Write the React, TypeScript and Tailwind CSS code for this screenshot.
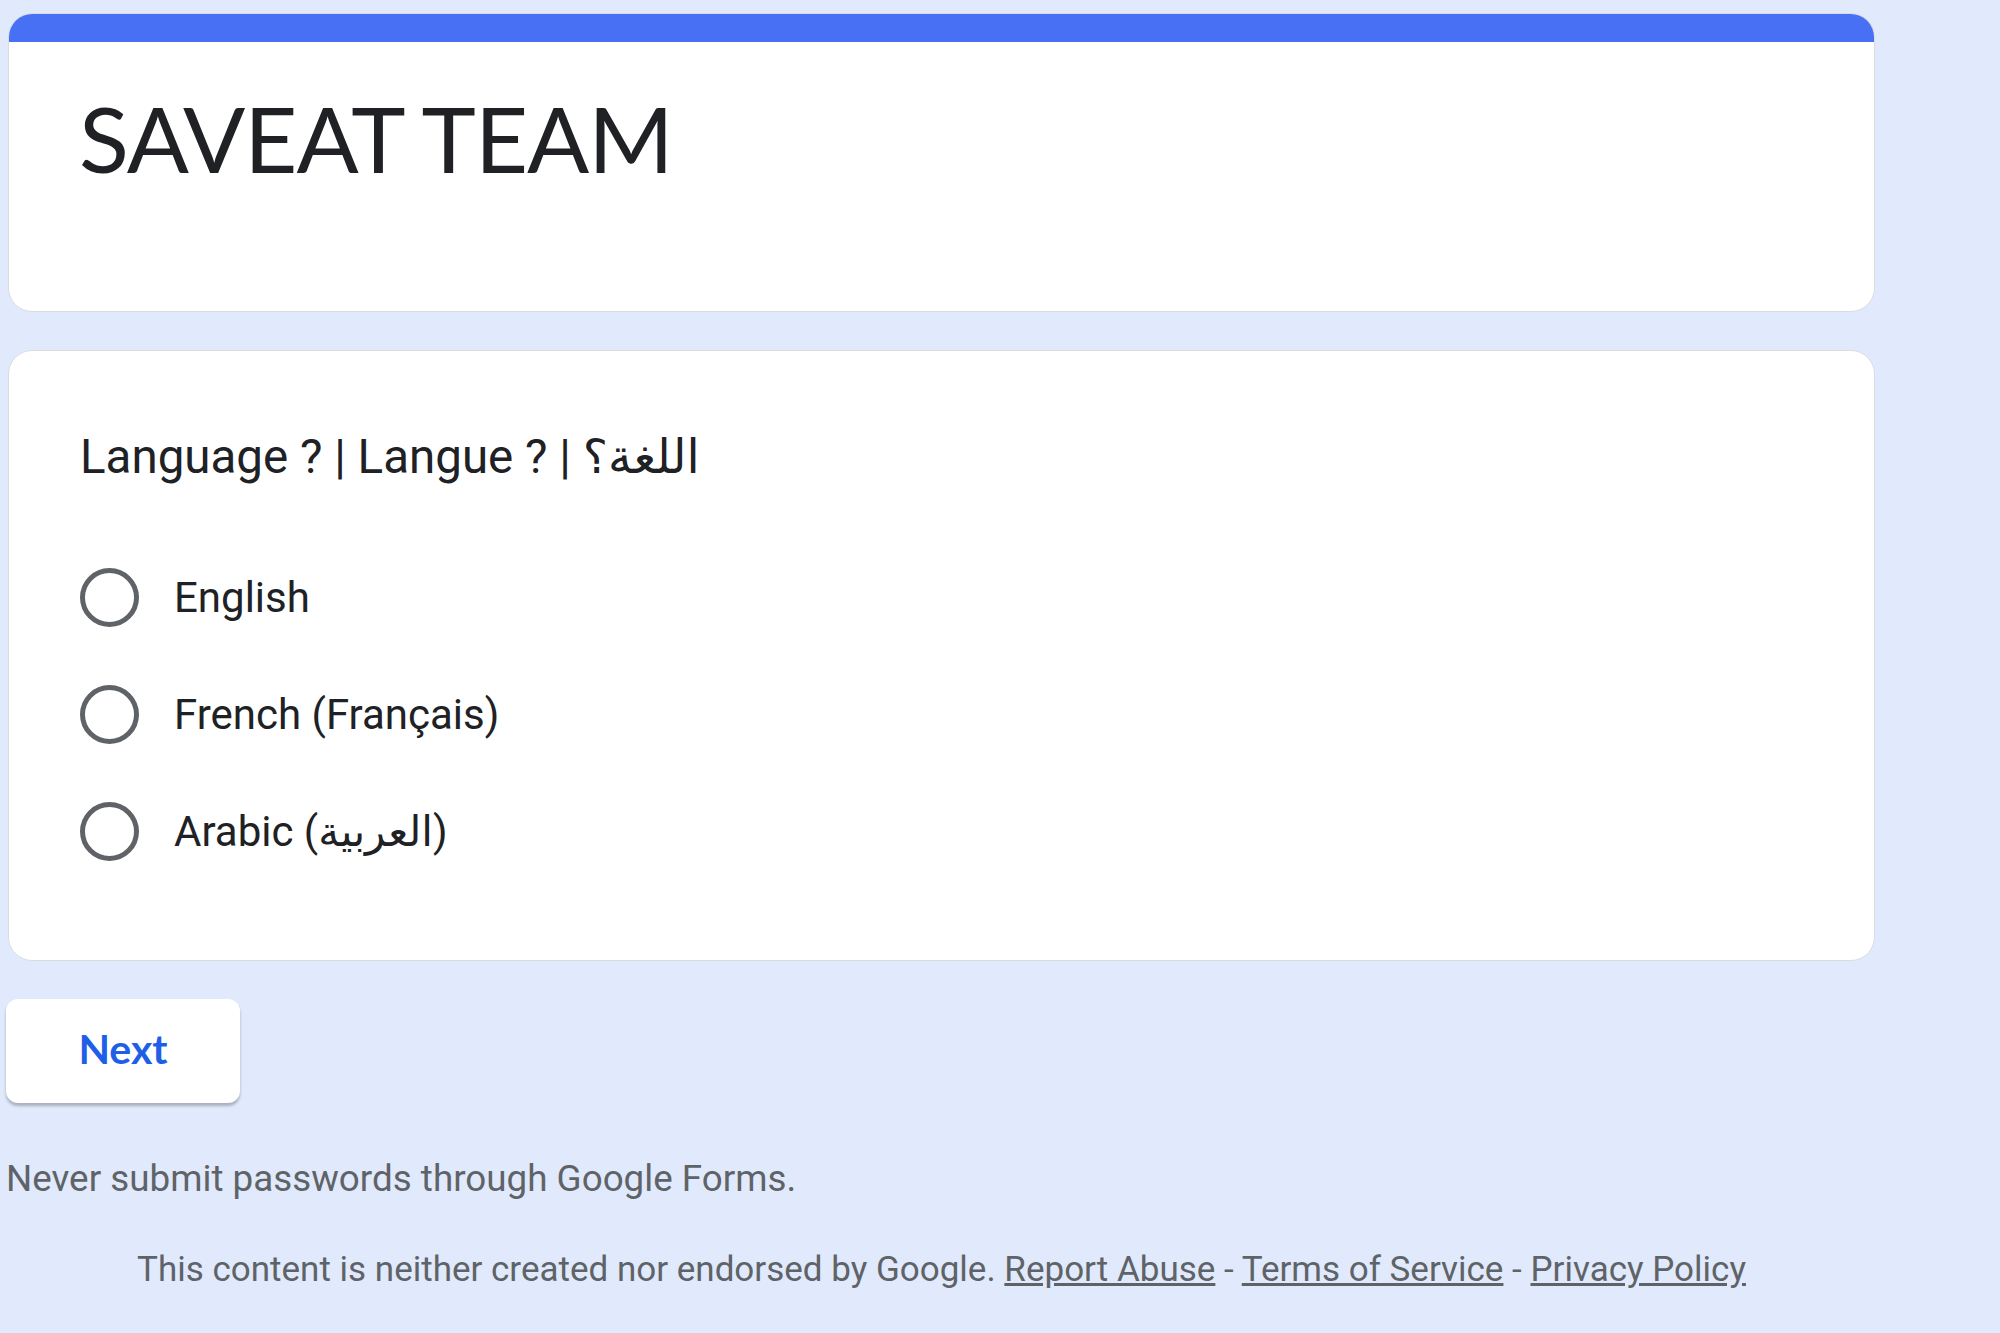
import { useState } from "react";

const options = ["English", "French (Français)", "Arabic (العربية)"];

export default function App() {
  const [selected, setSelected] = useState<string | null>(null);

  return (
    <div
      className="min-h-screen w-full bg-[#e0eafc] pt-[13px]"
      style={{ fontFamily: "Roboto, 'DejaVu Sans', sans-serif" }}
    >
      <div className="ml-[8px] w-[1867px] flex flex-col">
        {/* header card */}
        <div className="rounded-[24px] bg-white border border-[#dadce0] overflow-hidden">
          <div className="h-[28px] bg-[#4870f4]" />
          <div className="h-[269px] px-[70px] pt-[36px]">
            <h1 className="text-[92px] leading-[120px] text-[#202124] font-['Lato',sans-serif] tracking-[-1px]">
              SAVEAT TEAM
            </h1>
          </div>
        </div>

        {/* question card */}
        <div className="mt-[38px] rounded-[24px] bg-white border border-[#dadce0] px-[71px] pt-[74px] pb-[70px]">
          <div className="text-[47.5px] leading-[64px] text-[#202124]">
            Language ? | Langue ? | اللغة؟
          </div>
          <div className="mt-[50px] flex flex-col">
            {options.map((opt) => (
              <label
                key={opt}
                className="h-[117px] flex items-center gap-[35px] cursor-pointer"
                onClick={() => setSelected(opt)}
              >
                <span className="w-[59px] h-[59px] rounded-full border-[5px] border-[#5f6368] flex items-center justify-center">
                  {selected === opt && (
                    <span className="w-[30px] h-[30px] rounded-full bg-[#4870f4]" />
                  )}
                </span>
                <span className="text-[42px] leading-[56px] text-[#202124]">
                  {opt}
                </span>
              </label>
            ))}
          </div>
        </div>

        {/* next */}
        <div className="mt-[38px]">
          <button className="ml-[-2px] w-[234px] h-[104px] pb-[4px] rounded-[12px] bg-white shadow-[0_3px_3px_rgba(0,0,0,0.25)] text-[#1f5fe8] text-[41px] font-bold font-['Lato',sans-serif]">
            Next
          </button>
        </div>

        <div className="mt-[52px] ml-[-2px] text-[36.8px] leading-[48px] text-[#5f6368]">
          Never submit passwords through Google Forms.
        </div>

        <div className="mt-[43px] text-center text-[35px] leading-[48px] text-[#5f6368]">
          This content is neither created nor endorsed by Google.{" "}
          <a className="underline">Report Abuse</a> -{" "}
          <a className="underline">Terms of Service</a> -{" "}
          <a className="underline">Privacy Policy</a>
        </div>
      </div>
    </div>
  );
}
